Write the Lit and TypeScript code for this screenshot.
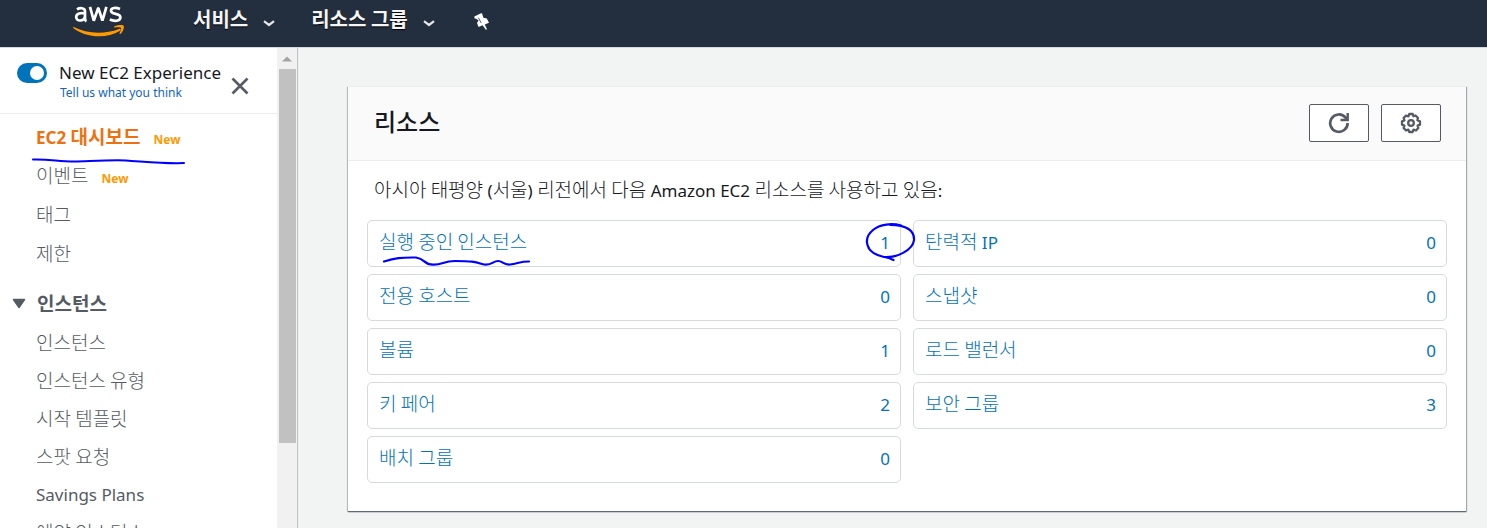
import { LitElement, html, css, svg } from "lit";
import { customElement, property, state } from "lit/decorators.js";

interface NavItem {
  label: string;
  isNew?: boolean;
  active?: boolean;
}

interface Resource {
  label: string;
  count: number;
  marked?: boolean;
}

const overview: NavItem[] = [
  { label: "EC2 대시보드", isNew: true, active: true },
  { label: "이벤트", isNew: true },
  { label: "태그" },
  { label: "제한" },
];

const instances: NavItem[] = [
  { label: "인스턴스" },
  { label: "인스턴스 유형" },
  { label: "시작 템플릿" },
  { label: "스팟 요청" },
  { label: "Savings Plans" },
  { label: "예약 인스턴스" },
];

const resources: Resource[] = [
  { label: "실행 중인 인스턴스", count: 1, marked: true },
  { label: "탄력적 IP", count: 0 },
  { label: "전용 호스트", count: 0 },
  { label: "스냅샷", count: 0 },
  { label: "볼륨", count: 1 },
  { label: "로드 밸런서", count: 0 },
  { label: "키 페어", count: 2 },
  { label: "보안 그룹", count: 3 },
  { label: "배치 그룹", count: 0 },
];

// Wraps runs of Hangul so that they can be set a little larger than the Latin text.
const mixed = (text: string) =>
  text
    .split(/([\uac00-\ud7a3]+(?: +[\uac00-\ud7a3]+)*)/)
    .filter((part) => part)
    .map((part) => (/[\uac00-\ud7a3]/.test(part) ? html`<span class="ko">${part}</span>` : part));

const koreanText = css`
  .ko {
    font-family: "Noto Sans CJK KR", sans-serif;
    font-size: 19px;
    font-weight: 300;
  }
  a {
    color: inherit;
    text-decoration: none;
  }
`;

@customElement("top-bar")
export class TopBar extends LitElement {
  static styles = css`
    :host {
      display: flex;
      align-items: center;
      height: 47px;
      box-sizing: border-box;
      padding: 0 20px 8px 72px;
      background: #232f3e;
      color: #fff;
    }
    .logo {
      display: flex;
      margin-right: 67px;
    }
    .menu {
      display: flex;
      align-items: center;
      gap: 15px;
      margin-right: 36px;
      padding: 0 0 2px;
      border: 0;
      background: none;
      color: #f5f5f5;
      font: 700 20px/28px "Noto Sans CJK KR", sans-serif;
      text-shadow: 0 1px 1px #000;
    }
    .menu svg {
      margin-top: 9px;
    }
    .pin {
      display: flex;
      margin: 4px 0 0 3px;
      padding: 0;
      border: 0;
      background: none;
    }
  `;

  private menu(label: string) {
    return html`<button class="menu">
      ${label}
      <svg width="12" height="7" viewBox="0 0 12 7">
        <path d="M1 1.2L6 5L11 1.2" fill="none" stroke="#e6e6e6" stroke-width="2.2" />
      </svg>
    </button>`;
  }

  render() {
    return html`
      <a class="logo" href="#" aria-label="aws">
        <svg width="54" height="34" viewBox="0 0 54 34">
          <g fill="none" stroke="#fff" stroke-width="2.7">
            <path d="M5 6.3C7 5.1 13 3.9 13 8.5V15.7Q13 17.5 14.5 18.3M13 10.5C9 9.5 4.2 10.1 4.2 14.1C4.2 18.9 12 18.5 13 13.7" />
            <path d="M18 3.9L21.8 17.7L26.1 5.3H26.5L30.4 17.7L34.4 3.9" stroke-linejoin="bevel" />
            <path d="M48 6C44 4.3 39 4.5 39 7.7C39 12 48.4 9.7 48.4 14.3C48.4 18.5 42 18.5 37.8 16.6" />
          </g>
          <path d="M1.2 23.8C15 31 32 31.6 47 26C48.5 25.4 49.3 26.8 48 27.8C34 36.5 13 34.5 1.2 25Z" fill="#f90" />
          <path d="M42.5 23.2C46 21.8 50 21.6 51.5 22.4C52.6 24 51 29 48.3 31C47.6 31.3 47.3 31 47.6 30.2C48.6 28 49.4 25.6 48.9 24.8C48.1 24 45.4 24.2 42.8 24.5C42 24.4 41.9 23.7 42.5 23.2Z" fill="#f90" />
        </svg>
      </a>
      ${this.menu("서비스")} ${this.menu("리소스 그룹")}
      <button class="pin" aria-label="고정">
        <svg width="16" height="17" viewBox="0 0 16 17" fill="#fff">
          <path d="M6.5 0.5L8 0.2L9.4 4.8L12.8 5.5L15 9.8L10.8 11.4L13 16.2L11.8 16.8L8.6 12.3L4.6 14L3 10L4.6 7.6L2.2 5.7L0.6 5.4L0.3 3.4Z" />
          <path d="M4.3 4.6L7.1 9.8" stroke="#232f3e" stroke-width="0.8" />
        </svg>
      </button>
    `;
  }
}

@customElement("side-nav")
export class SideNav extends LitElement {
  static styles = [
    koreanText,
    css`
      :host {
        display: grid;
        grid-template-columns: 277px 20px 2px;
        min-height: 0;
        overflow: hidden;
        background: #fff;
        color: #545b64;
        font: 17px/24px "Noto Sans", sans-serif;
      }
      .content {
        min-height: 0;
        overflow: hidden;
      }
      .intro {
        display: flex;
        align-items: flex-start;
        height: 66px;
        box-sizing: border-box;
        padding: 14px 28px 0 17px;
        border-bottom: 1px solid #eaeded;
      }
      .toggle {
        appearance: none;
        position: relative;
        width: 30px;
        height: 20px;
        margin: 1px 12px 0 0;
        border-radius: 10px;
        background: #0073bb;
      }
      .toggle::after {
        content: "";
        position: absolute;
        top: 3px;
        left: 3px;
        width: 14px;
        height: 14px;
        border-radius: 50%;
        background: #fff;
      }
      .toggle:checked::after {
        left: 13px;
      }
      .title {
        display: block;
        color: #16191f;
        line-height: 22px;
        white-space: nowrap;
      }
      .feedback {
        display: block;
        padding-left: 1px;
        color: #1166bb;
        font-size: 12px;
        line-height: 18px;
      }
      .close {
        display: flex;
        margin: 15px 0 0 auto;
        padding: 0;
        border: 0;
        background: none;
      }
      .list {
        margin: 0;
        padding: 3px 0 0 36px;
        list-style: none;
      }
      .list li {
        display: flex;
        align-items: center;
        height: 39px;
      }
      .list.sub {
        padding-top: 0;
      }
      .list.sub li {
        height: 38px;
      }
      .link {
        position: relative;
        white-space: nowrap;
      }
      .active,
      .active .ko {
        color: #ec7211;
        font-weight: 700;
      }
      .new {
        margin: 6px 0 0 13px;
        color: #ff9900;
        font-size: 12px;
        font-weight: 700;
      }
      .stroke {
        position: absolute;
        top: 33px;
        left: -4px;
        overflow: visible;
        pointer-events: none;
      }
      .group {
        display: flex;
        align-items: center;
        gap: 11px;
        width: 100%;
        height: 40px;
        margin: 10px 0 1px;
        padding: 0 0 2px 12px;
        border: 0;
        background: none;
        color: inherit;
      }
      .group svg {
        margin-top: 2px;
      }
      .group .ko {
        font-weight: 700;
      }
      .scroll {
        display: grid;
        grid-template-rows: 21px 374px;
        justify-items: center;
        background: #f1f1f1;
      }
      .up {
        align-self: center;
      }
      .thumb {
        width: 17px;
        background: #c1c1c1;
      }
      .edge {
        border-left: 1px solid #c0c4c5;
        background: #eaeded;
      }
    `,
  ];

  @state() private open = true;

  private item(item: NavItem) {
    return html`<li>
      <a class="link ${item.active ? "active" : ""}" href="#">
        ${mixed(item.label)}
        ${item.active
          ? svg`<svg class="stroke" width="154" height="8" viewBox="0 0 154 8">
              <path d="M1 2.5C18 2 26 4.5 42 4.5C60 4 78 2.8 94 3.4C112 4.5 132 6.8 152 6" fill="none" stroke="#00f" stroke-width="2" stroke-linecap="round" />
            </svg>`
          : ""}
      </a>
      ${item.isNew ? html`<span class="new">New</span>` : ""}
    </li>`;
  }

  render() {
    return html`
      <nav class="content">
        <div class="intro">
          <input class="toggle" id="experience" type="checkbox" checked />
          <div>
            <label class="title" for="experience">New EC2 Experience</label>
            <a class="feedback" href="#">Tell us what you think</a>
          </div>
          <button class="close" aria-label="닫기">
            <svg width="18" height="18" viewBox="0 0 18 18">
              <path d="M1.5 1.5L16.5 16.5M16.5 1.5L1.5 16.5" stroke="#545b64" stroke-width="2.6" />
            </svg>
          </button>
        </div>
        <ul class="list">${overview.map((i) => this.item(i))}</ul>
        <button class="group" aria-expanded=${this.open} @click=${() => (this.open = !this.open)}>
          <svg width="14" height="11" viewBox="0 0 14 11">
            <path d="M1.5 1.5H12.5L7 9.5Z" fill="#545b64" stroke="#545b64" stroke-width="1.5" stroke-linejoin="round" />
          </svg>
          ${mixed("인스턴스")}
        </button>
        ${this.open ? html`<ul class="list sub">${instances.map((i) => this.item(i))}</ul>` : ""}
      </nav>
      <div class="scroll" aria-hidden="true">
        <svg class="up" width="10" height="6" viewBox="0 0 10 6"><path d="M0 5.5L5 0.5L10 5.5Z" fill="#a3a3a3" /></svg>
        <div class="thumb"></div>
      </div>
      <div class="edge"></div>
    `;
  }
}

@customElement("resource-cell")
export class ResourceCell extends LitElement {
  static styles = [
    koreanText,
    css`
      :host {
        display: flex;
        align-items: center;
        justify-content: space-between;
        box-sizing: border-box;
        height: 47px;
        padding: 0 10px 0 11px;
        border: 1px solid #d5dbdb;
        border-radius: 5px;
        color: #0073bb;
        font: 17px/24px "Noto Sans", sans-serif;
      }
      .name {
        position: relative;
        padding-bottom: 3px;
      }
      .count {
        position: relative;
        padding-bottom: 2px;
      }
      .underline,
      .circle {
        position: absolute;
        overflow: visible;
        pointer-events: none;
        fill: none;
        stroke: #00f;
        stroke-width: 2.2;
        stroke-linecap: round;
      }
      .underline {
        top: 27px;
        left: 4px;
      }
      .circle {
        top: -8px;
        right: -25px;
        z-index: 1;
      }
    `,
  ];

  @property({ attribute: false }) resource!: Resource;

  render() {
    const { label, count, marked } = this.resource;
    return html`
      <a class="name" href="#">
        ${mixed(label)}
        ${marked
          ? html`<svg class="underline" width="147" height="10" viewBox="0 0 147 10">
              <path d="M1 5.5C12 2 18 1.3 33 1.5C43 3 40 8.5 50 8.7C60 9 60 5 72 5C90 5 92 6 101 8.5C109 9.5 110 5 115 5C120 5 120 9 127 8.5C136 7 138 5.5 146 5.5" />
            </svg>`
          : ""}
      </a>
      <a class="count" href="#">
        ${count}
        ${marked
          ? html`<svg class="circle" width="49" height="38" viewBox="0 0 49 38">
              <path d="M35 2.5C26 0 14 1 7 7C1 12 0 17 1.5 22C3 28 9 32 18 34C31 35 47 27 48 17C48.5 8 41 1.8 24 1.8M20 34.5C24 35 25 36 27.5 37" />
            </svg>`
          : ""}
      </a>
    `;
  }
}

@customElement("resource-panel")
export class ResourcePanel extends LitElement {
  static styles = [
    koreanText,
    css`
      :host {
        display: block;
        padding-bottom: 28px;
        border-top: 1px solid #eaeded;
        background: #fff;
        box-shadow: 0 1px 1px 0 #5f6b75, 1px 1px 1px 0 #aab7b8, -1px 1px 1px 0 #c5cccc;
        color: #16191f;
        font: 17px/24px "Noto Sans", sans-serif;
      }
      .head {
        display: flex;
        align-items: center;
        gap: 12px;
        height: 74px;
        box-sizing: border-box;
        padding: 0 25px 2px 26px;
        border-bottom: 1px solid #eaeded;
        background: #fafafa;
      }
      .heading {
        flex: 1;
        margin: 0;
        padding-bottom: 4px;
        font: 500 24px/32px "Noto Sans CJK KR", sans-serif;
      }
      .action {
        display: flex;
        align-items: center;
        justify-content: center;
        width: 60px;
        height: 38px;
        padding: 0;
        border: 1px solid #545b64;
        border-radius: 2px;
        background: #fff;
      }
      .action svg {
        fill: none;
        stroke: #545b64;
      }
      .summary {
        margin: 0;
        padding: 16px 26px 17px;
      }
      .grid {
        display: grid;
        grid-template-columns: 1fr 1fr;
        gap: 7px 12px;
        padding: 0 19px;
      }
    `,
  ];

  render() {
    return html`
      <header class="head">
        <h2 class="heading">리소스</h2>
        <button class="action" aria-label="새로 고침">
          <svg width="22" height="22" viewBox="0 0 22 22" stroke-width="2.7">
            <path d="M19.6 11A8.7 8.7 0 1 1 17.5 5.5L19 7.5" />
            <path d="M19.7 1V8H12.5" stroke-width="2.4" />
          </svg>
        </button>
        <button class="action" aria-label="설정">
          <svg width="22" height="22" viewBox="0 0 22 22" stroke-width="2.3" stroke-linejoin="round">
            <path d="M9.3 2H12.7L13.4 4.2L15.5 3.5L18 6L17.4 8.3L20 9.4V12.6L17.6 13.6L18.3 16L16 18.5L13.5 17.6L12.7 20H9.3L8.4 17.6L6 18.4L3.6 16L4.4 13.6L2 12.6V9.4L4.4 8.4L3.6 6L6 3.6L8.4 4.3Z" />
            <circle cx="11" cy="11" r="2.8" />
          </svg>
        </button>
      </header>
      <p class="summary">${mixed("아시아 태평양 (서울) 리전에서 다음 Amazon EC2 리소스를 사용하고 있음:")}</p>
      <div class="grid">
        ${resources.map((r) => html`<resource-cell .resource=${r}></resource-cell>`)}
      </div>
    `;
  }
}

@customElement("app-root")
export class AppRoot extends LitElement {
  static styles = css`
    :host {
      display: grid;
      grid-template-rows: auto minmax(0, 1fr);
      height: 100vh;
      overflow: hidden;
    }
    .body {
      display: grid;
      grid-template-columns: auto minmax(0, 1fr);
      grid-template-rows: minmax(0, 1fr);
      min-height: 0;
      border-top: 1px solid #d5dbdb;
      background: #f2f3f3;
    }
    .main {
      padding: 38px 21px 16px 49px;
    }
  `;

  render() {
    return html`
      <top-bar></top-bar>
      <div class="body">
        <side-nav></side-nav>
        <main class="main"><resource-panel></resource-panel></main>
      </div>
    `;
  }
}
